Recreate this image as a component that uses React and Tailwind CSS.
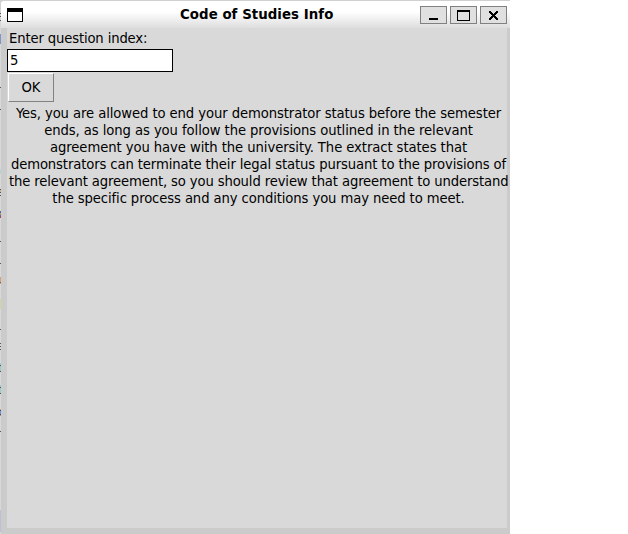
const edge = [
  [0, 13, '#d0d0d0'], [13, 1, '#555'], [16, 1, '#555'], [20, 1, '#555'], [34, 10, '#7f93cf'],
  [87, 1, '#555'], [109, 1, '#555'], [169, 5, '#b5d5d5'], [189, 1, '#555'], [190, 2, '#c8b890'],
  [192, 1, '#555'], [195, 1, '#555'], [211, 2, '#4d6fb0'], [213, 2, '#d08a60'], [215, 1, '#5a6fa0'],
  [216, 2, '#a04860'], [241, 1, '#555'], [263, 1, '#555'], [277, 5, '#d6a078'], [282, 1, '#80604a'],
  [283, 1, '#d6a078'], [299, 10, '#d4d49c'], [329, 1, '#555'], [343, 1, '#555'], [346, 1, '#555'],
  [349, 1, '#555'], [363, 2, '#9acccc'], [365, 1, '#3a6060'], [366, 5, '#9acccc'], [371, 1, '#555'],
  [385, 2, '#9acccc'], [387, 1, '#3a6060'], [388, 5, '#9acccc'], [393, 1, '#555'],
  [409, 1, '#d6a078'], [410, 1, '#444c70'], [411, 3, '#6a9ade'], [414, 1, '#444c70'], [415, 1, '#c09080'],
  [431, 1, '#555'], [510, 22, '#bcc0d8'],
];

const answer = [
  ['Yes, you are allowed to end your demonstrator status before the semester', 'tracking-[-0.085px]'],
  ['ends, as long as you follow the provisions outlined in the relevant', 'tracking-[-0.075px]'],
  ['agreement you have with the university. The extract states that', 'tracking-[-0.075px]'],
  ['demonstrators can terminate their legal status pursuant to the provisions of', 'tracking-[-0.11px]'],
  ['the relevant agreement, so you should review that agreement to understand', 'tracking-[-0.125px]'],
  ['the specific process and any conditions you may need to meet.', 'tracking-[-0.1px]'],
];

function WindowButton({ label, children }) {
  return (
    <button aria-label={label} className="h-[18px] w-[27px] border border-[#808080] bg-[#e0e0e0]">
      <svg width="25" height="16" viewBox="0 0 25 16" shapeRendering="crispEdges" className="block">
        {children}
      </svg>
    </button>
  );
}

export default function App() {
  return (
    <div className="flex h-[534px] w-[628px] overflow-hidden bg-white font-['DejaVu_Sans_Condensed','DejaVu_Sans',sans-serif] text-black">
      <div className="h-full w-px shrink-0 bg-[#d8d8d8]">
        {edge.map(([y, h, color], i) => {
          const prev = i ? edge[i - 1][0] + edge[i - 1][1] : 0;
          return (
            <div key={y} style={{ paddingTop: y - prev }}>
              <div style={{ height: h, background: color }} />
            </div>
          );
        })}
      </div>
      <main className="flex h-[534px] w-[509px] shrink-0 flex-col bg-[#cbcbcb]">
        <header className="flex h-7 shrink-0 items-start rounded-tl-[3px] border-t border-[#d0d0d0] bg-linear-to-b from-white from-40% to-[#dedede] pr-[3px] pl-1.5">
          <div className="mt-[7px] h-3.5 w-4 shrink-0 border border-t-4 border-black bg-white" />
          <h1 className="ml-[157px] w-[240px] pt-[5px] font-['DejaVu_Sans',sans-serif] text-[13.333px] leading-[17px] font-bold tracking-[0.05px] whitespace-nowrap">Code of Studies Info</h1>
          <div className="mt-[5px] flex gap-[3px]">
            <WindowButton label="Minimize"><path d="M8 11h9v2H8z" /></WindowButton>
            <WindowButton label="Maximize"><path fillRule="evenodd" d="M6 3h13v11H6zM7 5v8h11V5z" /></WindowButton>
            <WindowButton label="Close">
              <path d="M8 4h2v1h1v1h1v1h1V6h1V5h1V4h2v2h-1v1h-1v1h-1v1h1v1h1v1h1v2h-2v-1h-1v-1h-1v-1h-1v1h-1v1h-1v1H8v-2h1v-1h1V9h1V8h-1V7H9V6H8z" />
            </WindowButton>
          </div>
        </header>
        <section className="ml-1.5 flex h-[500px] w-[500px] shrink-0 flex-col items-start bg-[#d9d9d9] text-[14.667px]">
          <label className="h-[21px] pt-px pl-[2px] leading-[17px] tracking-[-0.14px] whitespace-nowrap">Enter question index:</label>
          <input defaultValue="5" className="h-[23px] w-[166px] border border-black bg-white px-[2px] pb-[2px] leading-[17px] outline-none" />
          <button className="mt-px ml-px h-[29px] w-[46px] border border-t-white border-r-[#828282] border-b-[#828282] border-l-white bg-[#d9d9d9] pb-[2px] leading-[17px]">OK</button>
          <div className="mt-[2px] ml-[2px] w-[499px] leading-[17px]">
            {answer.map(([line, tracking]) => (
              <p key={line} className={`text-center whitespace-nowrap ${tracking}`}>{line}</p>
            ))}
          </div>
        </section>
      </main>
    </div>
  );
}
